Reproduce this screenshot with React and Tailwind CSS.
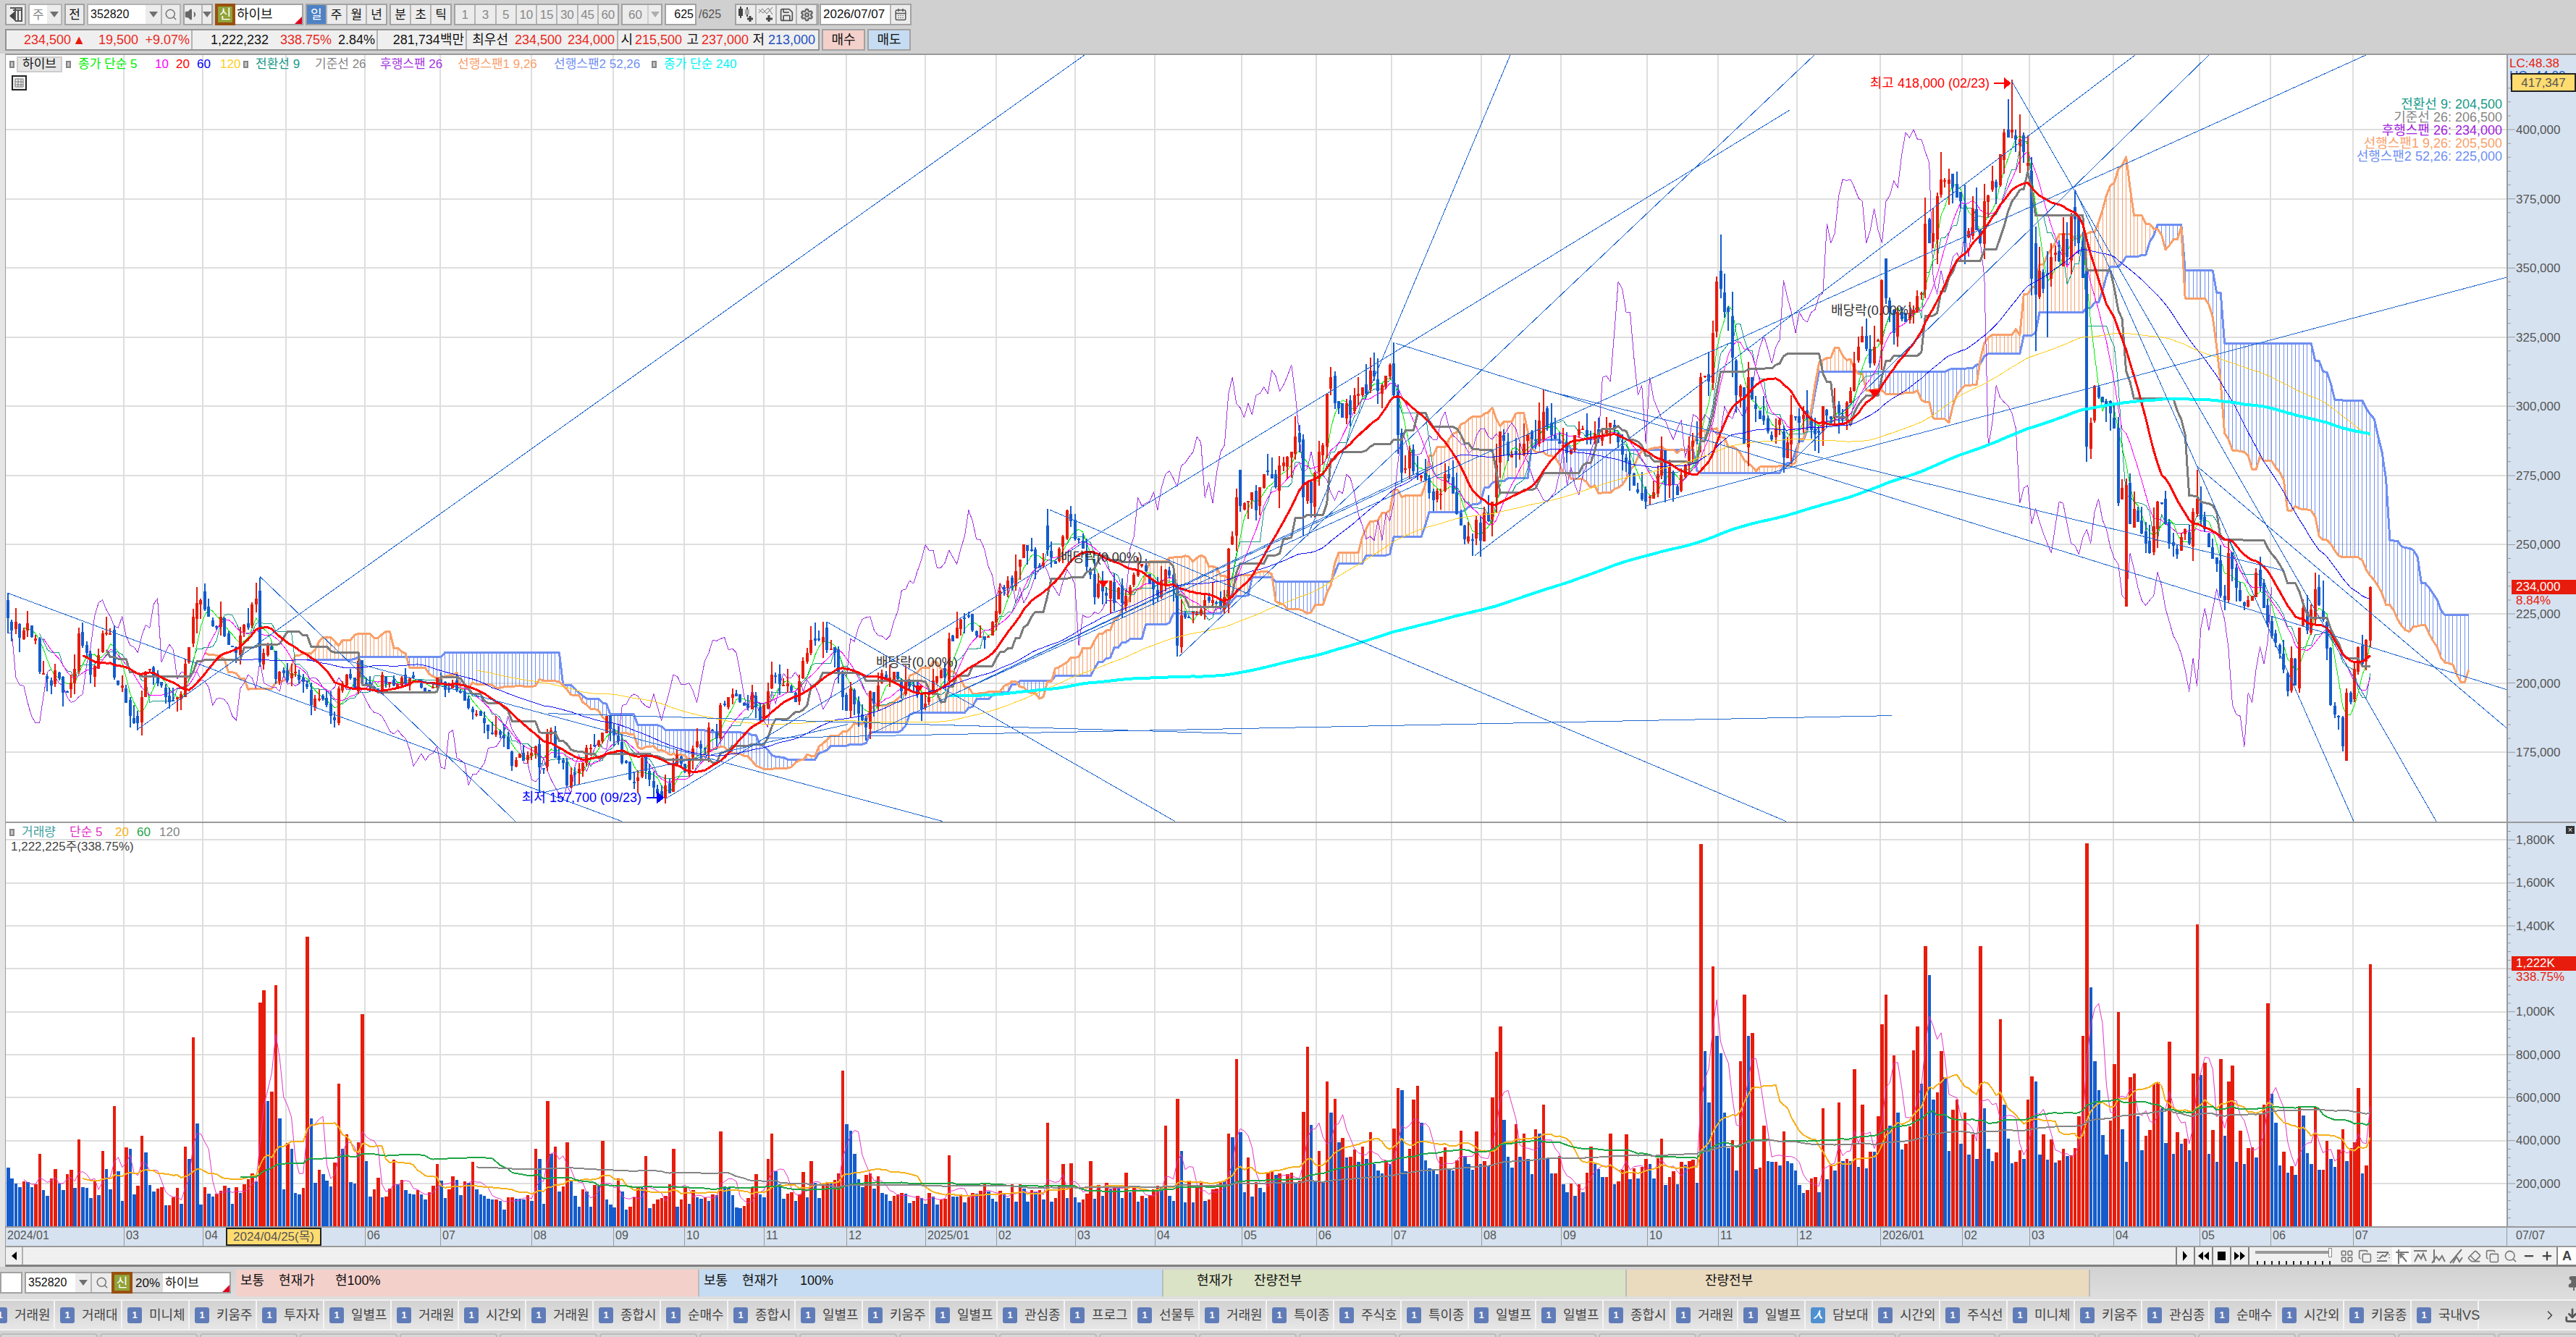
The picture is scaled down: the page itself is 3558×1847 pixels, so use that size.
import { Search, Save, Settings, Volume1, Copy, LayoutGrid, Eraser, Minus, Plus, Download, Pin, ChevronRight, CalendarDays } from 'lucide-react'

const BARS = 601
const STEP = 5.438
const W = 3454
const PH = 1058
const VH = 558

// [bar, close in thousands]
const CLOSES = [
  [0, 223.4], [1, 219], [2, 222], [3, 216.4], [4, 219], [5, 221.5], [6, 216.5], [7, 216], [8, 204], [11, 199], [12, 204.5], [14, 196.5], [15, 197], [17, 205], [18, 218], [20, 211], [21, 203], [23, 210], [24, 218],
  [26, 218], [27, 202], [29, 199], [31, 188], [33, 185.5], [34, 195], [35, 204], [36, 205], [37, 202], [39, 199], [41, 193], [43, 195], [44, 196], [45, 207], [46, 213], [47, 224], [48, 229], [49, 230], [50, 226.5],
  [51, 224], [53, 220], [54, 224], [55, 217], [57, 213], [58, 211], [60, 221], [61, 220], [62, 228.5], [63, 230.5], [64, 207.5], [65, 211], [66, 214], [67, 212], [68, 201.5], [69, 204], [71, 201], [73, 204], [75, 200.5],
  [76, 198.5], [77, 192], [79, 194.5], [80, 194], [82, 188], [83, 186.5], [84, 198], [85, 200], [86, 203], [88, 198], [89, 208], [90, 200], [92, 198.5], [94, 197], [95, 203], [96, 199.5], [98, 199], [100, 202], [101, 200],
  [103, 202], [106, 197], [108, 198.5], [109, 202], [110, 200], [112, 197.5], [113, 200], [115, 196.5], [117, 191], [119, 189], [121, 185.5], [122, 182.5], [124, 183], [126, 180], [127, 176], [128, 170], [130, 174.5],
  [131, 172], [132, 174], [134, 177], [135, 169.5], [136, 169], [137, 182], [138, 183], [139, 173], [141, 171], [142, 163], [143, 167], [145, 169], [146, 171], [147, 176.5], [149, 177], [151, 182], [152, 188], [154, 181],
  [155, 179], [156, 171], [157, 171], [158, 165], [160, 166], [161, 173], [163, 165], [165, 160], [166, 158], [167, 163], [168, 160], [169, 170], [170, 174], [172, 168], [173, 172.5], [175, 179], [177, 176], [178, 184],
  [180, 180], [181, 192], [183, 195], [184, 196], [186, 193], [188, 191], [189, 196], [191, 186.5], [193, 197], [194, 203], [196, 199.5], [198, 200], [200, 193], [202, 208], [204, 215.5], [206, 216], [207, 216.5],
  [208, 212], [210, 211], [211, 203.5], [212, 195], [213, 190], [214, 198], [216, 189], [218, 184], [219, 197], [220, 192.5], [222, 203.5], [224, 202], [225, 204], [227, 197], [228, 201], [230, 199], [232, 190.5],
  [234, 195], [235, 201], [237, 204.5], [238, 202], [239, 216], [240, 215], [241, 220], [242, 223], [244, 224], [245, 219], [247, 217], [249, 217], [251, 226], [252, 233.5], [254, 237], [255, 236], [257, 244.5], [258, 250],
  [260, 248], [261, 241.5], [263, 243.5], [264, 248], [265, 245.5], [266, 243], [267, 248.5], [268, 253], [269, 262.5], [270, 258.5], [271, 252], [273, 248.5], [275, 239], [276, 231], [277, 236], [278, 233], [279, 231.5],
  [280, 237], [281, 229], [282, 234.5], [283, 229], [284, 231.5], [286, 239], [288, 243], [289, 240.5], [290, 236], [292, 231.5], [293, 237], [294, 241], [296, 235.5], [297, 213.5], [298, 224.5], [300, 224], [302, 225],
  [304, 230], [306, 230], [308, 227.5], [309, 231], [310, 248.5], [311, 253], [312, 267], [313, 264], [314, 265], [316, 269], [317, 262.5], [319, 275.5], [321, 274], [322, 271], [323, 278.5], [326, 283.5], [327, 289],
  [328, 287], [329, 267], [330, 272.5], [331, 265], [333, 283.5], [334, 286], [335, 304.5], [336, 310.5], [337, 301], [339, 296], [340, 301], [341, 297], [342, 304], [344, 307], [345, 304.5], [346, 313], [348, 305.5],
  [350, 311], [351, 315], [352, 304], [353, 289.5], [354, 276], [355, 277.5], [356, 283.5], [357, 276.5], [359, 275], [360, 273.5], [362, 266], [363, 269.5], [364, 268.5], [365, 275.5], [367, 268.5], [368, 261], [370, 252],
  [372, 251.5], [373, 259], [374, 251.5], [375, 261.5], [376, 258.5], [377, 265.5], [378, 279], [379, 291], [381, 282.5], [383, 282.5], [385, 286.5], [386, 289.5], [388, 288], [390, 298], [392, 289.5], [394, 286.5],
  [396, 283], [398, 289.5], [400, 292], [402, 288], [404, 288.5], [405, 289.5], [407, 294], [409, 287], [411, 280], [412, 275.5], [414, 269], [416, 265.5], [418, 269], [420, 284], [421, 271.5], [422, 278], [424, 268],
  [426, 279], [428, 287.5], [429, 288], [430, 310.5], [431, 311], [432, 309], [433, 326.5], [434, 345], [435, 342.5], [436, 334], [437, 334], [438, 317.5], [439, 304], [440, 307.5], [441, 286.5], [442, 310.5], [443, 302.5],
  [445, 295.5], [448, 288], [450, 295], [451, 281.5], [452, 287], [453, 297], [455, 294], [456, 297], [458, 291.5], [460, 290.5], [461, 300], [463, 295.5], [464, 300], [466, 295.5], [467, 301.5], [468, 305.5], [469, 315.5],
  [471, 325.5], [473, 315.5], [475, 324], [476, 345.5], [477, 339], [478, 334], [479, 326.5], [480, 334], [482, 330.5], [484, 335], [486, 341], [487, 366], [488, 359], [489, 362.5], [490, 376], [491, 382], [493, 382],
  [494, 379], [496, 374], [497, 359], [498, 363.5], [499, 371.5], [501, 359], [502, 374], [504, 381.5], [505, 379], [506, 391], [507, 399], [509, 400], [511, 396.5], [512, 392], [513, 388], [514, 346], [515, 340.5],
  [516, 349], [517, 342.5], [519, 354], [521, 352.5], [522, 362.5], [523, 354], [524, 369], [525, 367.5], [526, 359], [527, 346.5], [528, 285.5], [529, 294], [530, 307.5], [532, 301.5], [534, 297.5], [535, 292], [536, 265],
  [537, 270.5], [538, 271.5], [539, 257.5], [540, 263], [542, 254], [544, 247], [546, 265.5], [547, 265], [548, 257.5], [549, 250.5], [551, 246.5], [553, 255.5], [554, 250.5], [555, 262], [556, 266.5], [557, 259],
  [559, 249], [561, 243], [562, 231.5], [563, 230], [564, 247], [566, 234.5], [568, 228], [570, 231.5], [571, 240], [573, 227], [575, 217], [577, 210.5], [579, 197], [580, 209], [581, 199], [582, 220], [583, 227],
  [584, 219], [586, 234], [588, 223], [589, 212.5], [590, 192], [592, 188], [593, 177], [594, 196.5], [595, 193], [596, 205], [597, 213], [598, 207], [599, 215.5], [600, 234.7],
]

// days whose range stands out: [open, high, low]
const RANGES = {
  0: [230, 232.5, 218], 33: [188, 190, 183], 50: [233, 236, 226], 64: [233.5, 238, 206], 89: [197, 209, 196],
  135: [178, 180, 160.5], 166: [161, 163, 157.7], 208: [220, 222, 211], 264: [257, 263, 246], 297: [235, 236, 209.5],
  313: [277, 277, 262], 329: [288, 290, 253], 352: [315.5, 323, 303], 372: [252, 254, 246], 390: [288, 306, 287],
  416: [270, 271, 263], 434: [327, 347, 325], 435: [349, 362, 339], 451: [291, 293, 276], 477: [353.5, 353.5, 337],
  509: [399, 418, 397], 512: [398, 399, 388], 513: [387, 398, 384], 514: [385, 390, 340], 515: [359, 365, 320], 518: [348, 356, 325], 525: [372, 378, 358], 528: [349, 352, 280],
  538: [227.5, 274, 227.5], 556: [261, 277, 260], 564: [230, 252, 229], 586: [223, 240, 221], 588: [226, 237, 222], 594: [172, 198, 172],
}

// [bar, volume in thousands]
const SPIKES = [
  [0, 275], [8, 337], [12, 267], [18, 406], [24, 352], [27, 560], [30, 367], [31, 361], [34, 422], [35, 345], [45, 373], [46, 316], [47, 882], [48, 481], [64, 1043], [65, 1100], [66, 584], [67, 629], [68, 1124], [69, 502],
  [71, 388], [72, 361], [76, 1351], [77, 502], [84, 665], [85, 361], [86, 429], [89, 392], [90, 988], [98, 310], [109, 291], [118, 302], [134, 361], [135, 316], [137, 584], [138, 337], [139, 373], [142, 392], [151, 398],
  [162, 327], [169, 361], [181, 443], [193, 316], [194, 432], [204, 306], [212, 726], [213, 478], [214, 447], [215, 337], [239, 333], [264, 484], [268, 290], [270, 296], [275, 306], [284, 250], [294, 469], [297, 594],
  [298, 353], [310, 432], [311, 416], [312, 781], [313, 438], [315, 320], [329, 534], [330, 836], [331, 474], [333, 353], [335, 676], [336, 529], [337, 594], [338, 392], [339, 413], [342, 357], [344, 373], [346, 438],
  [352, 457], [353, 645], [354, 634], [356, 361], [357, 590], [358, 655], [359, 484], [365, 367], [369, 447], [373, 443], [377, 600], [378, 812], [379, 933], [380, 498], [383, 478], [385, 432], [388, 453], [389, 432],
  [390, 569], [402, 373], [407, 432], [411, 429], [420, 408], [430, 1782], [431, 817], [432, 579], [433, 1212], [434, 888], [435, 806], [436, 529], [440, 771], [441, 1080], [442, 888], [443, 902], [446, 469], [451, 443],
  [461, 551], [465, 579], [469, 731], [471, 569], [475, 513], [476, 943], [477, 1080], [478, 470], [479, 796], [480, 529], [484, 820], [485, 933], [486, 665], [487, 1307], [488, 1171], [489, 590], [490, 624], [491, 817],
  [492, 695], [494, 545], [495, 590], [497, 529], [501, 1307], [502, 549], [506, 964], [507, 569], [513, 590], [514, 700], [515, 676], [526, 514], [527, 888], [528, 1786], [529, 1114], [530, 771], [531, 634], [534, 493],
  [535, 755], [536, 999], [539, 695], [540, 714], [541, 513], [545, 665], [546, 673], [547, 551], [549, 862], [555, 714], [556, 1406], [557, 706], [558, 762], [562, 781], [564, 676], [565, 751], [572, 527], [573, 566],
  [574, 1040], [575, 618], [576, 484], [582, 560], [583, 518], [586, 553], [593, 453], [597, 645], [600, 1221],
]

// quiet-day volume: [first bar, low, high]
const BASE = [[0, 100, 270], [38, 95, 190], [60, 130, 250], [78, 170, 330], [92, 120, 240], [120, 70, 150], [140, 70, 230], [170, 85, 210], [190, 120, 260], [216, 170, 250], [222, 90, 160], [245, 110, 210], [280, 110, 200], [298, 110, 230], [320, 200, 260], [340, 240, 330], [395, 120, 260], [402, 190, 320], [432, 260, 420], [443, 240, 320], [455, 140, 240], [463, 260, 360], [477, 330, 470], [500, 260, 430], [530, 280, 460], [576, 230, 400]]

const rnd = (n) => {
  const v = Math.sin(n * 127.1 + 311.7) * 43758.5453
  return v - Math.floor(v)
}

const bars = []
let seg = 0
for (let i = 0; i < BARS; i++) {
  while (seg < CLOSES.length - 2 && CLOSES[seg + 1][0] <= i) seg++
  const [a, ca] = CLOSES[seg]
  const [b, cb] = CLOSES[seg + 1]
  const onAnchor = i === a || i === b
  const close = ca + ((cb - ca) * (i - a)) / (b - a) + (onAnchor ? 0 : (rnd(i) - 0.5) * ca * 0.014)
  const prev = i ? bars[i - 1].close : close
  const open = prev + (rnd(i + 900) - 0.5) * ca * 0.012
  const calm = i > 84 && i < 116 ? 0.5 : 1
  const high = Math.max(open, close) + rnd(i + 2000) ** 2 * ca * 0.028 * calm
  const low = Math.min(open, close) - rnd(i + 3000) ** 2 * ca * 0.026 * calm
  const r = RANGES[i]
  bars.push(r ? { close, open: r[0], high: r[1], low: r[2] } : { close, open, high, low })
}

const spikes = new Map(SPIKES)
bars.forEach((b, i) => {
  const [, lo, hi] = BASE.filter((s) => s[0] <= i).pop()
  b.vol = spikes.get(i) ?? lo + rnd(i + 5000) * (hi - lo)
})

const px = (i) => 3 + i * STEP
const py = (p) => 103 + (400 - p) * 3.82
const vy = (v) => VH - v * 0.297

const avg = (key, n) => bars.map((_, i) => (i < n - 1 ? null : bars.slice(i - n + 1, i + 1).reduce((s, b) => s + b[key], 0) / n))
const mid = (n) => bars.map((_, i) => {
  if (i < n - 1) return null
  const w = bars.slice(i - n + 1, i + 1)
  return (Math.max(...w.map((b) => b.high)) + Math.min(...w.map((b) => b.low))) / 2
})
const line = (vals, y, shift = 0) => vals
  .map((v, i) => (v == null || i + shift < 0 ? null : `${px(i + shift).toFixed(1)},${y(v).toFixed(1)}`))
  .filter(Boolean)
  .join(' ')

const conv = mid(9)
const base = mid(26)
const spanA = conv.map((v, i) => (base[i] == null ? null : (v + base[i]) / 2))
const spanB = mid(52)
const SHIFT = 25

const MONTHS = [
  [163, '03'], [272, '04'], [387, ''], [496, '06'], [600, '07'], [726, '08'], [839, '09'], [937, '10'], [1047, '11'], [1161, '12'], [1270, '2025/01'], [1368, '02'], [1477, '03'], [1587, '04'], [1707, '05'], [1810, '06'],
  [1914, '07'], [2038, '08'], [2148, '09'], [2267, '10'], [2365, '11'], [2474, '12'], [2589, '2026/01'], [2702, '02'], [2795, '03'], [2911, '04'], [3030, '05'], [3128, '06'], [3242, '07'],
]
const PRICES = [400, 375, 350, 325, 300, 275, 250, 225, 200, 175]
const VOLUMES = [[1800, '1,800K'], [1600, '1,600K'], [1400, '1,400K'], [1200, ''], [1000, '1,000K'], [800, '800,000'], [600, '600,000'], [400, '400,000'], [200, '200,000']]

const TRENDS = [
  [3, 743, 851, 1058], [182, 931, 1490, 0], [351, 720, 704, 1058], [471, 836, 1294, 1058], [743, 1018, 1163, 924],
  [749, 909, 1707, 937], [1048, 943, 2605, 912], [911, 1027, 2464, 76], [1135, 783, 1615, 1058], [1442, 628, 2459, 1058],
  [1621, 830, 2498, 0], [1798, 664, 2078, 0], [1310, 882, 3260, 0], [1195, 937, 1970, 567], [1310, 882, 1962, 574],
  [2029, 691, 2941, 0], [2456, 572, 3043, 0], [2264, 623, 3454, 307], [1920, 398, 3454, 876], [2126, 463, 3147, 712],
  [2770, 35, 3357, 1058], [2858, 186, 3243, 1058], [3027, 568, 3454, 929],
]

const Grid = ({ rows, h }) => (
  <path
    d={MONTHS.map(([x]) => `M${x} 0V${h}`).join('') + rows.map((y) => `M0 ${y}H${W}`).join('')}
    stroke="#dedede" strokeWidth="2" fill="none"
  />
)

const Poly = ({ pts, c, w = 1 }) => <polyline points={pts} fill="none" stroke={c} strokeWidth={w} strokeLinejoin="round" />

function PriceChart() {
  return (
    <svg className="absolute inset-0 h-full w-full" viewBox={`0 0 ${W} ${PH}`} preserveAspectRatio="none" shapeRendering="crispEdges">
      <Grid rows={PRICES.map(py)} h={PH} />
      {spanA.map((a, i) => a != null && spanB[i] != null && (
        <line key={i} x1={px(i + SHIFT)} x2={px(i + SHIFT)} y1={py(a)} y2={py(spanB[i])} stroke={a > spanB[i] ? '#f9a06a' : '#7090f2'} strokeWidth="1" />
      ))}
      <Poly pts={line(spanB, py, SHIFT)} c="#6f8ff2" w={3} />
      <Poly pts={line(spanA, py, SHIFT)} c="#f9a06a" w={3} />
      <Poly pts={line(bars.map((b) => b.close), py, -SHIFT)} c="#a335e0" />
      <Poly pts={line(conv, py)} c="#179a88" />
      <Poly pts={line(avg('close', 5), py)} c="#00f000" />
      <Poly pts={line(avg('close', 10), py)} c="#ff00ff" />
      {bars.map((b, i) => {
        const up = b.close >= b.open
        const c = up ? '#e81c0c' : '#145ccc'
        return (
          <g key={i} fill={c}>
            <rect x={px(i) - 1} y={py(b.high)} width="2" height={py(b.low) - py(b.high)} />
            <rect x={px(i) - 2} y={py(Math.max(b.open, b.close))} width="4" height={Math.max(2, Math.abs(b.open - b.close) * 3.82)} />
          </g>
        )
      })}
      <Poly pts={line(base, py)} c="#7b7b7b" w={3} />
      <Poly pts={line(avg('close', 60), py)} c="#1010f0" />
      <Poly pts={line(avg('close', 120), py)} c="#ffcc1a" />
      <Poly pts={line(avg('close', 20), py)} c="#ff0000" w={3} />
      <Poly pts={line(avg('close', 240), py)} c="#00ffff" w={4} />
      <path d={TRENDS.map(([a, b, c, d]) => `M${a} ${b}L${c} ${d}`).join('')} stroke="#1f66cf" strokeWidth="1" fill="none" />
      <path d="M1254 870h14l-7 10zM1509 726h14l-7 10zM2573 462h14l-7 10zM2746 38h14v-7l10 8-10 8v-7h-14z" fill="#f00" />
      <path d="M885 1024h14v-8l10 9-10 9v-8h-14z" fill="#00f" />
    </svg>
  )
}

function VolumeChart() {
  return (
    <svg className="absolute inset-0 h-full w-full" viewBox={`0 0 ${W} ${VH}`} preserveAspectRatio="none" shapeRendering="crispEdges">
      <Grid rows={VOLUMES.map(([v]) => vy(v))} h={VH} />
      {/* red when more was traded than the day before */}
      {bars.map((b, i) => (
        <rect key={i} x={px(i) - 2} y={vy(b.vol)} width="4.5" height={VH - vy(b.vol)} fill={i && b.vol >= bars[i - 1].vol ? '#e81c0c' : '#145ccc'} />
      ))}
      <Poly pts={line(avg('vol', 5), vy)} c="#e332c4" />
      <Poly pts={line(avg('vol', 20), vy)} c="#f5b11c" w={2} />
      <Poly pts={line(avg('vol', 60), vy)} c="#1ea545" w={2} />
      <Poly pts={line(avg('vol', 120), vy)} c="#858585" w={2} />
    </svg>
  )
}

const pct = (v, total) => `${(v / total) * 100}%`

const Arrow = () => <svg width="12" height="8" viewBox="0 0 12 8"><path d="M0 0h12L6 8z" fill="#707070" /></svg>
const Marker = () => <i className="mr-[10px] h-[10px] w-[7px] shrink-0 border-2 border-[#858585] bg-[#c4c4c4]" />
const btn = 'flex items-center justify-center border-2 border-[#a2a2a2] bg-[#ececec]'

const Strip = ({ items, cls, cell }) => (
  <div className={`flex h-[30px] border-2 border-[#a2a2a2] bg-[#ececec] ${cls}`}>
    {items.map((t, i) => (
      <button key={i} className={`flex-1 border-r-2 border-[#b4b4b4] last:border-r-0 ${t === '일' ? 'bg-[#4e82c4] text-white' : ''} ${cell}`}>{t}</button>
    ))}
  </div>
)

function Toolbar() {
  return (
    <div className="flex h-[30px] gap-[3px] pl-[7px] text-[17px] leading-none whitespace-nowrap">
      <button className={`${btn} w-[29px]`} aria-label="패널">
        <svg width="18" height="20" viewBox="0 0 18 20"><path d="M1 1h16v18H8M8 1v18M12 4v15M5 4h12" fill="none" stroke="#555" strokeWidth="2" /><path d="M7 6v12L0 12z" fill="#444" /></svg>
      </button>
      <div className="flex w-[47px] items-center border-2 border-[#b4b4b4] bg-white">
        <select aria-label="종목 구분" className="w-[24px] appearance-none pl-1 text-[#888]"><option>주</option></select>
        <span className="flex h-full flex-1 items-center justify-center bg-[#ececec]"><Arrow /></span>
      </div>
      <button className={`${btn} w-[28px]`}>전</button>
      <div className="flex w-[130px] border-2 border-[#b4b4b4] bg-white">
        <input aria-label="종목코드" defaultValue="352820" className="w-[79px] pl-[3px] text-base" />
        <button className="flex w-[21px] items-center justify-center bg-[#ececec]" aria-label="목록"><Arrow /></button>
        <button className="flex flex-1 items-center justify-center border-l-2 border-[#b4b4b4] bg-[#ececec]" aria-label="검색"><Search size={18} color="#777" /></button>
      </div>
      <div className={`${btn} w-[41px]`}>
        <button className="flex-1" aria-label="소리"><Volume1 size={20} color="#666" fill="#666" /></button>
        <button className="flex h-full w-[14px] items-center justify-center border-l-2 border-[#b4b4b4]" aria-label="소리 목록"><Arrow /></button>
      </div>
      <div className="relative flex w-[122px] items-center border-2 border-[#a2a2a2] bg-white text-lg">
        <span className="mr-[2px] -ml-[2px] flex h-[30px] w-[28px] items-center justify-center border-4 border-[#99500f] bg-[#91a238] text-white">신</span>
        하이브
        <span className="absolute right-0 bottom-0 border-b-10 border-l-10 border-b-[#e00020] border-l-transparent" />
      </div>
      <Strip items={['일', '주', '월', '년']} cls="w-[113px]" cell="" />
      <Strip items={['분', '초', '틱']} cls="w-[86px]" cell="" />
      <Strip items={['1', '3', '5', '10', '15', '30', '45', '60']} cls="w-[228px]" cell="text-[#888]" />
      <div className={`${btn} w-[57px]`}>
        <select aria-label="분 단위" className="w-[34px] appearance-none pl-2 text-[#888]"><option>60</option></select>
        <span className="flex h-full flex-1 items-center justify-center border-l-2 border-[#b4b4b4] opacity-50"><Arrow /></span>
      </div>
      <input aria-label="봉 개수" defaultValue="625" className="w-[44px] border-2 border-[#a2a2a2] bg-white pr-[2px] text-right text-base" />
      <span className="flex w-[47px] items-center text-base text-[#555]">/625</span>
      <div className="flex w-[116px] border-2 border-[#a2a2a2] bg-[#ececec] [&>button]:flex [&>button]:flex-1 [&>button]:items-center [&>button]:justify-center [&>button]:border-r-2 [&>button]:border-[#b4b4b4]">
        <button aria-label="봉 추가">
          <svg width="22" height="22" viewBox="0 0 22 22"><path d="M4 0v16M13 1v13" stroke="#444" strokeWidth="2" /><path d="M1 3h6v10H1z" fill="#444" /><path d="M10 4h6v7h-6z" fill="#aaa" /><path d="M17 13v8M13 17h8" stroke="#444" strokeWidth="3" /></svg>
        </button>
        <button aria-label="지표 추가">
          <svg width="22" height="22" viewBox="0 0 22 22"><path d="M1 9l5-6 6 7 8-9M1 4l6 5 7-7 6 9" fill="none" stroke="#777" strokeWidth="1" /><path d="M15 12v9M11 17h9" stroke="#444" strokeWidth="3" /></svg>
        </button>
        <button aria-label="저장"><Save size={21} color="#555" /></button>
        <button aria-label="설정"><Settings size={19} color="#666" strokeWidth={3} /></button>
      </div>
      <div className="-ml-[2px] flex w-[127px] border-2 border-[#a2a2a2] bg-white">
        <input aria-label="조회일" defaultValue="2026/07/07" className="w-[95px] pl-[3px] text-[17px]" />
        <button className="flex flex-1 items-center justify-center border-l-2 border-[#b4b4b4] bg-[#ececec]" aria-label="달력"><CalendarDays size={18} color="#555" /></button>
      </div>
    </div>
  )
}

const QUOTES = [
  ['w-[89px] text-[#e8281c]', '234,500'], ['w-[20px] text-[#e8180c]', '▲'], ['w-[73px] text-[#e8281c]', '19,500'], ['w-[75px] border-r-2 border-[#b4b4b4] pr-[2px] text-[#e8281c]', '+9.07%'],
  ['w-[105px]', '1,222,232'], ['w-[87px] text-[#e8281c]', '338.75%'], ['w-[64px] border-r-2 border-[#b4b4b4] pr-[2px]', '2.84%'], ['w-[123px] border-r-2 border-[#b4b4b4] pr-[2px]', '281,734백만'],
  ['w-[57px]', '최우선'], ['w-[74px] text-[#e8281c]', '234,500'], ['w-[78px] border-r-2 border-[#b4b4b4] pr-[3px] text-[#e8281c]', '234,000'], ['w-[20px]', '시'], ['w-[68px] text-[#e8281c]', '215,500'],
  ['w-[23px]', '고'], ['w-[69px] text-[#e8281c]', '237,000'], ['w-[22px]', '저'], ['w-[70px] text-[#1f50c0]', '213,000'],
]

const LEGEND = [
  ['w-[106px] text-[#00f000]', '종가 단순 5'], ['w-[29px] text-[#ff00ff]', '10'], ['w-[29px] text-[#ff0000]', '20'], ['w-[32px] text-[#0000ff]', '60'], ['w-[32px] text-[#ffcc1a]', '120'], ['m'],
  ['w-[82px] text-[#179a88]', '전환선 9'], ['w-[90px] text-[#858585]', '기준선 26'], ['w-[107px] text-[#a335e0]', '후행스팬 26'], ['w-[133px] text-[#f9a06a]', '선행스팬1 9,26'], ['w-[135px] text-[#6f8ff2]', '선행스팬2 52,26'], ['m'],
  ['w-[120px] text-[#00f4f4]', '종가 단순 240'],
]

const VALUES = [
  ['text-[#179a88]', '전환선 9: 204,500'], ['text-[#858585]', '기준선 26: 206,500'], ['text-[#a020e0]', '후행스팬 26: 234,000'], ['text-[#f9a06a]', '선행스팬1 9,26: 205,500'], ['text-[#6f8ff2]', '선행스팬2 52,26: 225,000'],
]

const TABS = '거래원 거래대 미니체 키움주 투자자 일별프 거래원 시간외 거래원 종합시 순매수 종합시 일별프 키움주 일별프 관심종 프로그 선물투 거래원 특이종 주식호 특이종 일별프 일별프 종합시 거래원 일별프 담보대 시간외 주식선 미니체 키움주 관심종 순매수 시간외 키움종 국내VS'.split(' ')

const NOTES = [[1202, 838, '배당락(0.00%)'], [1457, 694, '배당락(0.00%)'], [2521, 353, '배당락(0.00%)']]

// drawing tools at the right end of the scroll row
const TOOLS = [
  'M2 5h16M2 17h14M3 8v1M3 12v1M19 8v1M19 12v1M5 14l5-5 3 2 5-6', 'M2 5h18M6 1v20M8 7l9 11M8 7l6 1M8 7l1 6', 'M2 3h18M3 18l5-10 4 6 3-7 4 10', 'M5 1v18M2 20l6-9 4 5 4-6 4 8', 'M2 20L18 1M6 20l5-9 4 7 4-6',
]

export default function App() {
  return (
    <div className="flex min-h-screen w-full flex-col overflow-hidden bg-[#e6e6e6] font-['Liberation_Sans','Noto_Sans_CJK_KR',sans-serif] text-[#111]">
      <header className="flex flex-col gap-[5px] bg-[#d0d0d0] pt-[5px] pb-[4px]">
        <Toolbar />
        <div className="flex h-[30px] gap-[3px] pl-[7px] text-lg leading-none whitespace-nowrap">
          <div className="flex w-[1125px] items-center overflow-hidden border-2 border-[#929292] bg-[#efefef]">
            {QUOTES.map(([cls, t], i) => <span key={i} className={`flex h-full shrink-0 items-center justify-end ${cls}`}>{t}</span>)}
          </div>
          <button className="w-[60px] border-2 border-[#a2a2a2] bg-[#f4d0cb]">매수</button>
          <button className="w-[60px] border-2 border-[#a2a2a2] bg-[#c6dcf2]">매도</button>
        </div>
      </header>

      <main className="ml-[7px] flex grow flex-col border-t-2 border-l border-[#9a9a9a] bg-white">
        <section className="flex min-h-[400px] shrink-0 grow-[1060] basis-0 border-b-2 border-[#9a9a9a]">
          <div className="relative flex-1 overflow-hidden">
            <PriceChart />
            <div className="relative flex items-center pt-[2px] pl-[5px] text-[17px] leading-[20px] whitespace-nowrap">
              <Marker />
              <span className="mr-[5px] -ml-[7px] w-[63px] shrink-0 border-2 border-[#ccc] bg-[#e6e6e6] text-center leading-[18px]">하이브</span>
              <Marker />
              {LEGEND.map(([cls, t], i) => (t ? <span key={i} className={`shrink-0 ${cls}`}>{t}</span> : <Marker key={i} />))}
            </div>
            <button className="relative mt-[4px] ml-[8px] flex h-[21px] w-[21px] items-center justify-center border-2 border-[#222] bg-[#eee]" aria-label="표 보기">
              <svg width="13" height="13" viewBox="0 0 13 13"><path d="M1 1h11v11H1zM1 5h11M1 9h11M5 1v11M9 1v11" fill="none" stroke="#777" /></svg>
            </button>
            <div className="absolute top-[59px] right-[6px] text-right text-lg leading-[18px]">
              {VALUES.map(([cls, t]) => <div key={t} className={cls}>{t}</div>)}
            </div>
            {NOTES.map(([x, y, t]) => (
              <span key={x} className="absolute -translate-y-1/2 text-lg leading-none whitespace-nowrap text-[#333]" style={{ left: pct(x, W), top: pct(y, PH) }}>{t}</span>
            ))}
            <span className="absolute -translate-x-full -translate-y-1/2 text-lg leading-none whitespace-nowrap text-[#f00]" style={{ left: pct(2740, W), top: pct(39, PH) }}>최고 418,000 (02/23)</span>
            <span className="absolute -translate-x-full -translate-y-1/2 text-lg leading-none whitespace-nowrap text-[#00f]" style={{ left: pct(878, W), top: pct(1025, PH) }}>최저 157,700 (09/23)</span>
          </div>
          <aside className="relative w-24 overflow-hidden border-l-2 border-[#9a9a9a] bg-[#d6e2f0] text-[17px] leading-none text-[#555]">
            <svg className="absolute inset-0 h-full w-[10px]" viewBox={`0 0 10 ${PH}`} preserveAspectRatio="none">
              <path d={Array.from({ length: 52 }, (_, i) => `M0 ${py(415 - i * 5)}h${i % 5 === 3 ? 10 : 4}`).join('')} stroke="#999" strokeWidth="1" />
            </svg>
            {PRICES.map((p) => <span key={p} className="absolute left-[11px] -translate-y-1/2" style={{ top: pct(py(p), PH) }}>{p},000</span>)}
            <div className="relative pt-[3px] pl-[2px]">
              <div className="text-[#e81c0c]">LC:48.38</div>
              <div className="text-[#145ccc]">HC:-44.00</div>
            </div>
            <div className="absolute top-[25px] right-0 left-[4px] flex h-[26px] items-center justify-center border-2 border-[#222] bg-[#ffdc70]">417,347</div>
            <div className="absolute right-0 left-[5px] bg-[#e81c0c] pl-[6px] leading-[20px] text-white" style={{ top: pct(725, PH) }}>234,000</div>
            <span className="absolute left-[11px] text-[#e81c0c]" style={{ top: pct(745, PH) }}>8.84%</span>
          </aside>
        </section>

        <section className="flex min-h-[200px] shrink-0 grow-[558] basis-0">
          <div className="relative flex-1 overflow-hidden">
            <VolumeChart />
            <div className="relative pt-[3px] pl-[5px] text-[17px] leading-[20px] whitespace-nowrap">
              <div className="flex items-center">
                <Marker />
                <span className="w-[66px] text-[#3f9f9f]">거래량</span>
                <span className="w-[63px] text-[#e332c4]">단순 5</span>
                <span className="w-[30px] text-[#f5b11c]">20</span>
                <span className="w-[31px] text-[#1ea545]">60</span>
                <span className="text-[#858585]">120</span>
              </div>
              <div className="pl-[2px] text-[#444]">1,222,225주(338.75%)</div>
            </div>
          </div>
          <aside className="relative w-24 overflow-hidden border-l-2 border-[#9a9a9a] bg-[#d6e2f0] text-[17px] leading-none text-[#555]">
            <svg className="absolute inset-0 h-full w-[10px]" viewBox={`0 0 10 ${VH}`} preserveAspectRatio="none">
              <path d={Array.from({ length: 47 }, (_, i) => `M0 ${vy(i * 40)}h${i % 5 ? 4 : 10}`).join('')} stroke="#999" strokeWidth="1" />
            </svg>
            {VOLUMES.map(([v, t]) => <span key={v} className="absolute left-[11px] -translate-y-1/2" style={{ top: pct(vy(v), VH) }}>{t}</span>)}
            <button className="absolute top-[4px] right-[2px] flex h-[11px] w-[12px] items-center justify-center bg-[#333] text-[11px] text-white" aria-label="닫기">×</button>
            <div className="absolute right-0 left-[5px] bg-[#e81c0c] pl-[6px] leading-[20px] text-white" style={{ top: pct(185, VH) }}>1,222K</div>
            <span className="absolute left-[11px] text-[#e81c0c]" style={{ top: pct(205, VH) }}>338.75%</span>
          </aside>
        </section>

        <div className="flex h-[29px] border-y-2 border-[#9a9a9a] bg-[#d6e2f0] text-base leading-[22px] text-[#555]">
          <div className="relative flex-1">
            <span className="absolute left-0 pl-[2px]">2024/01</span>
            {MONTHS.map(([x, t]) => <span key={x} className="absolute h-[25px] border-l border-[#9a9a9a] pl-[2px]" style={{ left: pct(x, W) }}>{t}</span>)}
            <span className="absolute flex h-[25px] w-[132px] items-center justify-center border-2 border-[#222] bg-[#ffdc70] text-[17px]" style={{ left: pct(304, W) }}>2024/04/25(목)</span>
          </div>
          <span className="w-24 border-l border-[#9a9a9a] pl-[12px]">07/07</span>
        </div>

        <div className="flex h-[27px] items-stretch border-b-3 border-[#808080] bg-[#f0f0f0]">
          <button className="flex w-[24px] items-center justify-center border-r-2 border-[#b0b0b0]" aria-label="이전"><svg width="7" height="12" viewBox="0 0 7 12"><path d="M7 0v12L0 6z" /></svg></button>
          <div className="flex-1 border-r-2 border-[#808080]" />
          {['M7 4v14l6-7z', 'M10 5v12l-7-6zM18 5v12l-7-6z', 'M5 5h11v12H5z', 'M3 5v12l7-6zM11 5v12l7-6z'].map((d, i) => (
            <button key={d} className="flex w-[25px] items-center justify-center border-r-2 border-[#808080]" aria-label={['재생', '뒤로', '정지', '앞으로'][i]}><svg width="21" height="22" viewBox="0 0 21 22"><path d={d} /></svg></button>
          ))}
          <div className="mr-[8px] ml-[8px] flex w-[106px] flex-col justify-between">
            <input type="range" aria-label="확대 비율" defaultValue="100" className="h-[14px] w-full appearance-none bg-transparent [&::-webkit-slider-runnable-track]:h-[4px] [&::-webkit-slider-runnable-track]:bg-[#999] [&::-webkit-slider-thumb]:-mt-[4px] [&::-webkit-slider-thumb]:h-[13px] [&::-webkit-slider-thumb]:w-[5px] [&::-webkit-slider-thumb]:appearance-none [&::-webkit-slider-thumb]:border [&::-webkit-slider-thumb]:border-[#888] [&::-webkit-slider-thumb]:bg-white" />
            <svg className="h-[5px] w-full" viewBox="0 0 106 5"><path d="M3 0v5M13 0v5M23 0v5M33 0v5M43 0v5M53 0v5M63 0v5M73 0v5M83 0v5M93 0v5M103 0v5" stroke="#222" strokeWidth="2" /></svg>
          </div>
          <div className="flex w-[329px] text-[#777] [&>button]:flex [&>button]:flex-1 [&>button]:items-center [&>button]:justify-center">
            <button aria-label="분할"><LayoutGrid size={19} /></button>
            <button aria-label="복사"><Copy size={19} /></button>
            {TOOLS.map((d, i) => (
              <button key={d} className={i === 1 ? 'bg-white' : ''} aria-label={`선 도구 ${i + 1}`}><svg width="21" height="21" viewBox="0 0 21 21"><path d={d} fill="none" stroke="#777" strokeWidth="2" /></svg></button>
            ))}
            <button aria-label="지우기"><Eraser size={19} /></button>
            <button aria-label="겹치기"><Copy size={19} /></button>
            <button aria-label="확대경"><Search size={19} /></button>
            <button aria-label="축소"><Minus size={18} strokeWidth={3} color="#444" /></button>
            <button aria-label="확대"><Plus size={18} strokeWidth={3} color="#444" /></button>
            <button className="border-l-2 border-[#888] bg-white text-lg font-bold text-[#444]">A</button>
          </div>
        </div>
      </main>

      <footer>
        <div className="flex h-[45px] items-start bg-linear-to-b from-[#d2d2d2] to-[#dedede] pt-[4px] text-[17px] leading-none whitespace-nowrap">
          <div className="mt-[3px] flex h-[30px]">
            <span className="w-[31px] border-2 border-[#a2a2a2] bg-white" />
            <div className="ml-[3px] flex w-[120px] border-2 border-r-0 border-[#a2a2a2] bg-white">
              <input aria-label="주문 종목코드" defaultValue="352820" className="w-[68px] pl-[3px] text-base" />
              <button className="flex w-[21px] items-center justify-center bg-[#ececec]" aria-label="주문 목록"><Arrow /></button>
              <button className="flex flex-1 items-center justify-center border-l-2 border-[#b4b4b4] bg-[#ececec]" aria-label="주문 검색"><Search size={18} color="#777" /></button>
            </div>
            <div className="relative flex w-[165px] items-center border-2 border-[#a2a2a2] bg-white">
              <span className="-ml-[2px] flex h-[30px] w-[29px] items-center justify-center border-4 border-[#99500f] bg-[#91a238] text-white">신</span>
              <span className="mr-[3px] flex h-full w-[42px] items-center justify-center bg-[#dcdcdc]">20%</span>
              하이브
              <span className="absolute right-0 bottom-0 border-b-10 border-l-10 border-b-[#e00020] border-l-transparent" />
            </div>
          </div>
          <div className="ml-[7px] flex h-[37px] text-lg leading-[30px] [&>div]:border-r-2 [&>div]:border-[#bbb]">
            <div className="flex w-[640px] bg-[#f4d0cb] pl-[6px]"><span className="w-[53px]">보통</span><span className="w-[78px]">현재가</span><span>현100%</span></div>
            <div className="flex w-[641px] bg-[#c6dcf2] pl-[6px]"><span className="w-[53px]">보통</span><span className="w-[80px]">현재가</span><span>100%</span></div>
            <div className="flex w-[640px] bg-[#dae3c5] pl-[46px]"><span className="w-[79px]">현재가</span><span>잔량전부</span></div>
            <div className="w-[640px] bg-[#eadbbf] pl-[108px]">잔량전부</div>
          </div>
          <Pin className="mt-[8px] -mr-[8px] ml-auto" size={22} color="#666" fill="#666" />
        </div>
        <nav className="flex h-[41px] items-stretch overflow-hidden border-t-2 border-[#f2f2f2] bg-linear-to-b from-[#d2d2d2] to-[#e6e6e6] text-lg leading-none whitespace-nowrap text-[#444]">
          <div className="-ml-[17px] flex">
            {TABS.map((t, i) => (
              <a key={i} href="#tab" className="flex w-[93px] items-center gap-[10px] border-r-2 border-[#f4f4f4] pl-[7px]">
                <span className={`flex h-[22px] w-[20px] shrink-0 items-center justify-center rounded-[3px] text-[13px] font-bold text-white ${t === '담보대' ? 'bg-[#4e90d0] italic' : 'bg-[#607cb8]'}`}>{t === '담보대' ? '人' : '1'}</span>
                {t}
              </a>
            ))}
          </div>
          <button className="ml-auto w-[24px]" aria-label="다음 탭"><ChevronRight size={20} /></button>
          <button className="-mr-[8px] ml-[6px] w-[24px]" aria-label="내려받기"><Download size={22} strokeWidth={3} color="#555" /></button>
        </nav>
        <div className="flex h-[11px] items-end gap-[3px] overflow-hidden border-t-2 border-[#f2f2f2] bg-[#d4d4d4] pt-[4px]">
          {Array.from({ length: 26 }, (_, i) => <span key={i} className="h-[5px] w-[135px] shrink-0 rounded-t border-2 border-b-0 border-[#bcbcbc] bg-[#d8d8d8]" />)}
        </div>
      </footer>
    </div>
  )
}
